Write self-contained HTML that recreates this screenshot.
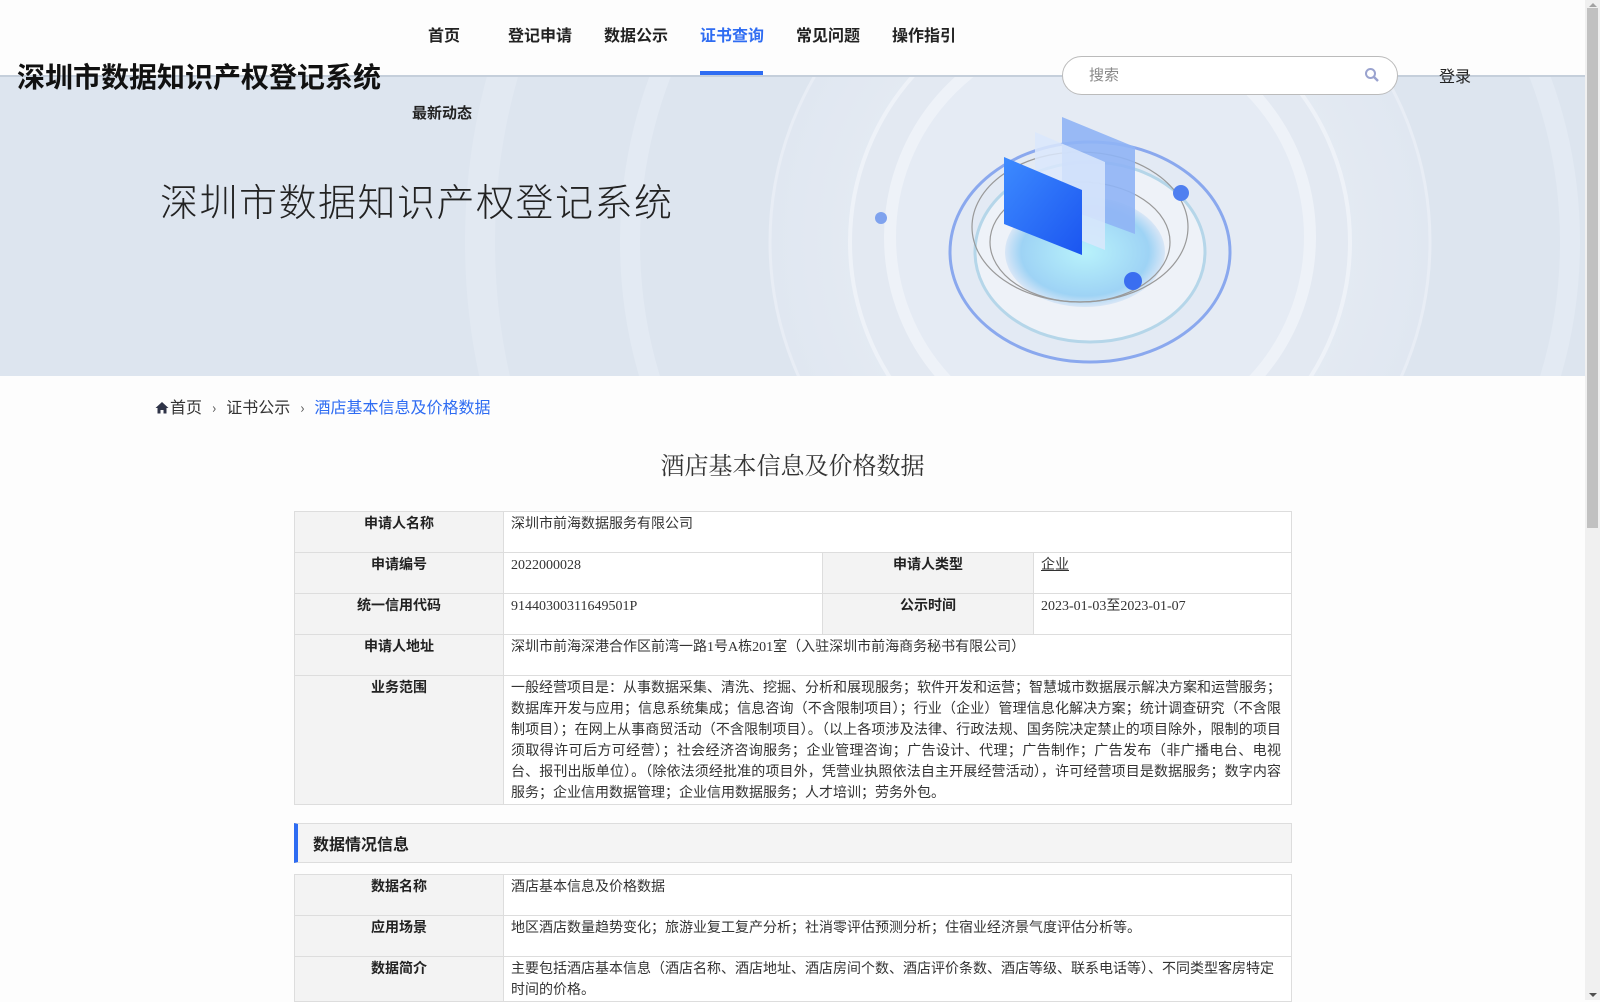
<!DOCTYPE html>
<html><head><meta charset="utf-8">
<style>
*{margin:0;padding:0;box-sizing:border-box}
html,body{width:1600px;height:1000px;overflow:hidden;background:#fdfdfd;font-family:"Liberation Serif","Noto Sans CJK SC",sans-serif;color:#333}
.abs{position:absolute}
.nav{position:absolute;top:26px;font:bold 16px/22px "Liberation Sans","Noto Sans CJK SC",sans-serif;color:#222}
.banner{position:absolute;left:0;top:75px;width:1585px;height:301px;background:#dde5ef;border-top:2px solid #c5cfdb;overflow:hidden}
table{border-collapse:collapse;position:absolute;left:294px;width:998px;font-size:14px;table-layout:fixed}
td{border:1px solid #ddd;vertical-align:top;padding:2px 7px 0 7px;line-height:21px;height:41px;background:#fff;color:#333}
td.l{background:#f3f3f3;font-weight:bold;text-align:center;color:#222;font-family:"Liberation Sans","Noto Sans CJK SC",sans-serif;padding-top:1px}
.bc{display:inline-block;margin:0 10px;color:#555;font-size:14px}
</style></head><body>
<div class="banner">
<svg width="1585" height="301" viewBox="0 75 1585 301">
<defs>
<radialGradient id="g1" cx="0.5" cy="0.5" r="0.5"><stop offset="0" stop-color="#eef2f8"/><stop offset="1" stop-color="#e0e7f1"/></radialGradient>
<radialGradient id="g2" cx="0.5" cy="0.5" r="0.5"><stop offset="0" stop-color="#b8f2fb"/><stop offset="0.8" stop-color="#9ed3f5"/><stop offset="1" stop-color="#d8e6f6"/></radialGradient>
<linearGradient id="g3" x1="0" y1="0" x2="1" y2="1"><stop offset="0" stop-color="#3d8bff"/><stop offset="1" stop-color="#1b55f0"/></linearGradient>
</defs>
<circle cx="1100" cy="240" r="620" fill="none" stroke="#e2e9f2" stroke-width="30"/>
<circle cx="1100" cy="240" r="470" fill="none" stroke="#e3eaf3" stroke-width="20"/>
<circle cx="1100" cy="240" r="330" fill="url(#g1)" stroke="#e8edf5" stroke-width="3"/>
<circle cx="1100" cy="240" r="250" fill="#e3e9f2" stroke="#eef2f8" stroke-width="4"/>
<circle cx="1100" cy="235" r="210" fill="#e5ebf4" stroke="#eef2f8" stroke-width="12"/>
<ellipse cx="1090" cy="250" rx="140" ry="110" fill="#e3eaf4" stroke="#8aa8ee" stroke-width="3"/>
<ellipse cx="1090" cy="250" rx="115" ry="90" fill="#eef2f8" stroke="#b5d6e9" stroke-width="3"/>
<ellipse cx="1085" cy="250" rx="80" ry="55" fill="url(#g2)"/>
<ellipse cx="1080" cy="225" rx="108" ry="75" fill="none" stroke="#999" stroke-width="1.2"/>
<ellipse cx="1080" cy="240" rx="90" ry="60" fill="none" stroke="#999" stroke-width="1.2"/>
<polygon points="1062,115 1135,145 1135,232 1062,205" fill="#8fb4f5" opacity="0.9"/>
<polygon points="1035,130 1105,160 1105,248 1035,220" fill="#dbe8fb" opacity="0.85"/>
<polygon points="1004,155 1082,188 1082,253 1004,222" fill="url(#g3)"/>
<circle cx="881" cy="216" r="6" fill="#7fa2ee"/>
<circle cx="1181" cy="191" r="8" fill="#4f7ff0"/>
<circle cx="1133" cy="279" r="9" fill="#3a6ef0"/>
</svg>
<div class="abs" style="left:160px;top:98px;font:38px/50px 'Noto Sans CJK SC',sans-serif;font-weight:300;color:#222;letter-spacing:1.5px">深圳市数据知识产权登记系统</div>
</div>

<div class="abs" style="left:17px;top:56px;font:bold 28px/40px 'Noto Sans CJK SC',sans-serif;color:#111">深圳市数据知识产权登记系统</div>
<div class="nav" style="left:428px">首页</div>
<div class="nav" style="left:508px">登记申请</div>
<div class="nav" style="left:604px">数据公示</div>
<div class="nav" style="left:700px;color:#2e6cf2">证书查询</div>
<div class="abs" style="left:700px;top:71px;width:63px;height:4px;background:#2e6cf2"></div>
<div class="nav" style="left:796px">常见问题</div>
<div class="nav" style="left:892px">操作指引</div>
<div class="nav" style="left:412px;top:103px;font-size:15px">最新动态</div>

<div class="abs" style="left:1062px;top:56px;width:336px;height:39px;border:1px solid #bbb;border-radius:20px;background:#fff"></div>
<div class="abs" style="left:1089px;top:64px;font:15px/22px 'Noto Sans CJK SC',sans-serif;color:#888">搜索</div>
<svg class="abs" style="left:1364px;top:67px" width="16" height="16" viewBox="0 0 16 16"><circle cx="6.5" cy="6.5" r="4.5" fill="none" stroke="#9aa3cf" stroke-width="2"/><line x1="10" y1="10" x2="14" y2="14" stroke="#9aa3cf" stroke-width="2.4"/></svg>
<div class="abs" style="left:1439px;top:64px;font:16px/22px 'Noto Sans CJK SC',sans-serif;color:#222">登录</div>

<div class="abs" style="left:155px;top:395px;font:16px/22px 'Noto Sans CJK SC',sans-serif;color:#333;white-space:nowrap">
<svg width="14" height="13" viewBox="0 0 14 13" style="vertical-align:-1px;margin-right:1px"><path d="M7 1 L0.5 7 H2.5 V12.5 H5.5 V9 H8.5 V12.5 H11.5 V7 H13.5 Z" fill="#2e3347"/></svg>首页<span class="bc">&#8250;</span>证书公示<span class="bc">&#8250;</span><span style="color:#2e6cf2">酒店基本信息及价格数据</span></div>

<div class="abs" style="left:0;width:1585px;top:447px;text-align:center;font:24px/34px 'Noto Serif CJK SC',serif;color:#333">酒店基本信息及价格数据</div>

<table style="top:511px">
<colgroup><col style="width:209px"><col style="width:319px"><col style="width:211px"><col></colgroup>
<tr><td class="l">申请人名称</td><td colspan="3">深圳市前海数据服务有限公司</td></tr>
<tr><td class="l">申请编号</td><td>2022000028</td><td class="l">申请人类型</td><td><u>企业</u></td></tr>
<tr><td class="l">统一信用代码</td><td>91440300311649501P</td><td class="l">公示时间</td><td>2023-01-03至2023-01-07</td></tr>
<tr><td class="l">申请人地址</td><td colspan="3">深圳市前海深港合作区前湾一路1号A栋201室（入驻深圳市前海商务秘书有限公司）</td></tr>
<tr><td class="l" style="height:127px">业务范围</td><td colspan="3" style="text-align:justify;padding-right:10px">一般经营项目是：从事数据采集、清洗、挖掘、分析和展现服务；软件开发和运营；智慧城市数据展示解决方案和运营服务；数据库开发与应用；信息系统集成；信息咨询（不含限制项目）；行业（企业）管理信息化解决方案；统计调查研究（不含限制项目）；在网上从事商贸活动（不含限制项目）。（以上各项涉及法律、行政法规、国务院决定禁止的项目除外，限制的项目须取得许可后方可经营）；社会经济咨询服务；企业管理咨询；广告设计、代理；广告制作；广告发布（非广播电台、电视台、报刊出版单位）。（除依法须经批准的项目外，凭营业执照依法自主开展经营活动），许可经营项目是数据服务；数字内容服务；企业信用数据管理；企业信用数据服务；人才培训；劳务外包。</td></tr>
</table>

<div class="abs" style="left:294px;top:823px;width:998px;height:40px;background:#f4f4f4;border:1px solid #ddd;border-left:4px solid #2e6cf2;font:bold 16px/38px 'Noto Sans CJK SC',sans-serif;padding-left:15px;color:#222">数据情况信息</div>

<table style="top:874px">
<colgroup><col style="width:209px"><col></colgroup>
<tr><td class="l">数据名称</td><td>酒店基本信息及价格数据</td></tr>
<tr><td class="l">应用场景</td><td>地区酒店数量趋势变化；旅游业复工复产分析；社消零评估预测分析；住宿业经济景气度评估分析等。</td></tr>
<tr><td class="l">数据简介</td><td>主要包括酒店基本信息（酒店名称、酒店地址、酒店房间个数、酒店评价条数、酒店等级、联系电话等）、不同类型客房特定时间的价格。</td></tr>
</table>

<div class="abs" style="left:1585px;top:0;width:15px;height:1000px;background:#f0f0f0"></div>
<div class="abs" style="left:1587px;top:8px;width:11px;height:520px;background:#c1c1c1"></div>
<div class="abs" style="left:1589px;top:3px;width:0;height:0;border-left:4px solid transparent;border-right:4px solid transparent;border-bottom:4px solid #a3a3a3"></div>
<div class="abs" style="left:1589px;top:993px;width:0;height:0;border-left:4px solid transparent;border-right:4px solid transparent;border-top:4px solid #505050"></div>
</body></html>
